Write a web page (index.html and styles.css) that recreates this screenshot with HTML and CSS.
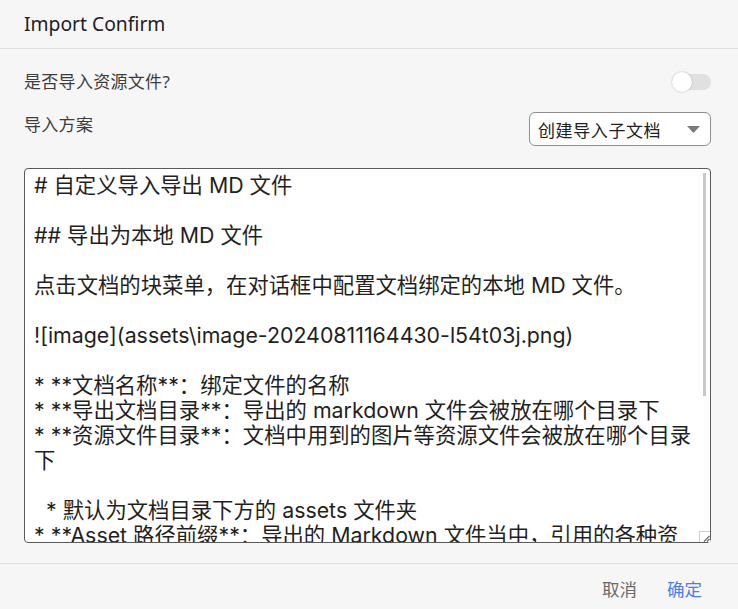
FILE: index.html
```html
<!DOCTYPE html>
<html lang="zh-CN">
<head>
<meta charset="utf-8">
<title>Import Confirm</title>
<link rel="stylesheet" href="styles.css">
</head>
<body>
<div class="dialog">
  <div class="dialog-header">
    <h1 class="dialog-title">Import Confirm</h1>
  </div>
  <div class="dialog-body">
    <div class="field-row">
      <span class="field-label">是否导入资源文件?</span>
      <label class="switch"><span class="switch-track"></span><span class="switch-knob"></span></label>
    </div>
    <div class="field-row field-row-top">
      <span class="field-label">导入方案</span>
      <div class="select">
        <span class="select-value">创建导入子文档</span>
        <svg class="select-arrow" width="13" height="7" viewBox="0 0 13 7"><path d="M0 0 H13 L6.5 7 Z" fill="#7a7a7a"/></svg>
      </div>
    </div>
    <div class="editor">
      <textarea class="md-input" spellcheck="false" readonly># 自定义导入导出 MD 文件

## 导出为本地 MD 文件

点击文档的块菜单，在对话框中配置文档绑定的本地 MD 文件。

![image](assets\image-20240811164430-l54t03j.png)

* **文档名称**：绑定文件的名称
* **导出文档目录**：导出的 markdown 文件会被放在哪个目录下
* **资源文件目录**：文档中用到的图片等资源文件会被放在哪个目录
下

  * 默认为文档目录下方的 assets 文件夹
* **Asset 路径前缀**：导出的 Markdown 文件当中，引用的各种资
源文件路径的前缀

## 从本地 MD 文件导入

点击文档的块菜单，选择导入本地 MD 文件。

* 导入时会覆盖当前文档的内容
* 资源文件会被复制到工作空间中

完成后即可在文档中继续编辑。</textarea>
      <span class="scroll-thumb"></span>
      <span class="resizer">
        <svg width="9" height="9" viewBox="0 0 9 9"><path d="M8.5 3 L3 8.5 M8.5 6 L6 8.5" stroke="#6a6a6a" stroke-width="1.2" fill="none"/></svg>
      </span>
    </div>
  </div>
  <div class="dialog-footer">
    <button class="btn btn-cancel" type="button">取消</button>
    <button class="btn btn-ok" type="button">确定</button>
  </div>
</div>
</body>
</html>
```

FILE: styles.css
```css
* {
  box-sizing: border-box;
}

html, body {
  margin: 0;
  padding: 0;
  background: #f6f6f6;
}

body {
  width: 738px;
  height: 609px;
  overflow: hidden;
  font-family: "Noto Sans", "Noto Sans CJK SC", sans-serif;
  color: #222;
}

.dialog {
  display: flex;
  flex-direction: column;
  height: 609px;
}

.dialog-header {
  height: 49px;
  padding: 0 24px;
  display: flex;
  align-items: center;
  border-bottom: 1px solid #e0e0e0;
}

.dialog-title {
  margin: 0;
  font-size: 19.3px;
  font-weight: 400;
  color: #202124;
  line-height: 24px;
  padding-bottom: 1px;
}

.dialog-body {
  padding: 16px 27px 0 24px;
  display: flex;
  flex-direction: column;
}

.field-row {
  display: flex;
  align-items: center;
  justify-content: space-between;
  height: 34px;
}

.field-row-top {
  margin-top: 14px;
  align-items: flex-start;
}

.field-label {
  font-size: 17px;
  line-height: 24px;
  color: #3d3d3d;
  letter-spacing: 0.3px;
}

.switch {
  display: flex;
  align-items: center;
  width: 39px;
  height: 21px;
}

.switch-track {
  width: 39px;
  height: 16px;
  border-radius: 8px;
  background: #e0e0e0;
}

.switch-knob {
  width: 20px;
  height: 20px;
  border-radius: 50%;
  background: #fff;
  box-shadow: 0 0 2px rgba(0, 0, 0, 0.28);
  margin-left: -39px;
}

.select {
  width: 182px;
  height: 34px;
  margin-top: -1px;
  border: 1px solid #8e8e8e;
  border-radius: 6px;
  background: #fff;
  display: flex;
  align-items: center;
  justify-content: space-between;
  padding: 0 10px 0 8px;
}

.select-value {
  font-size: 17px;
  color: #202020;
  letter-spacing: 0.6px;
}

.editor {
  position: relative;
  margin-top: 21px;
}

.md-input {
  display: block;
  width: 100%;
  height: 375px;
  border: 1px solid #5a5a5a;
  border-radius: 4px;
  background: #fff;
  padding: 4px 9px;
  font-family: "Inter", "Noto Sans CJK SC", sans-serif;
  font-size: 21.35px;
  line-height: 25px;
  color: #1f1f1f;
  white-space: pre;
  overflow: hidden;
  resize: none;
  outline: none;
}

.scroll-thumb {
  position: absolute;
  top: 5px;
  right: 5px;
  width: 3px;
  height: 223px;
  background: #c8c8c8;
}

.resizer {
  position: absolute;
  right: 1px;
  bottom: 1px;
  width: 11px;
  height: 11px;
  background: #fff;
  border-top: 1px solid #cfcfcf;
  border-left: 1px solid #cfcfcf;
  display: flex;
  align-items: flex-end;
  justify-content: flex-end;
}

.dialog-footer {
  margin-top: auto;
  height: 46px;
  border-top: 1px solid #e0e0e0;
  display: flex;
  justify-content: flex-end;
  align-items: center;
  gap: 6px;
  padding: 4px 24px 0 0;
}

.btn {
  border: 0;
  background: transparent;
  font-family: "Noto Sans", "Noto Sans CJK SC", sans-serif;
  font-size: 17.5px;
  padding: 4px 12px;
  line-height: 22px;
  cursor: pointer;
}

.btn-cancel {
  color: #6b6b6b;
}

.btn-ok {
  color: #4a7ef0;
}
```
